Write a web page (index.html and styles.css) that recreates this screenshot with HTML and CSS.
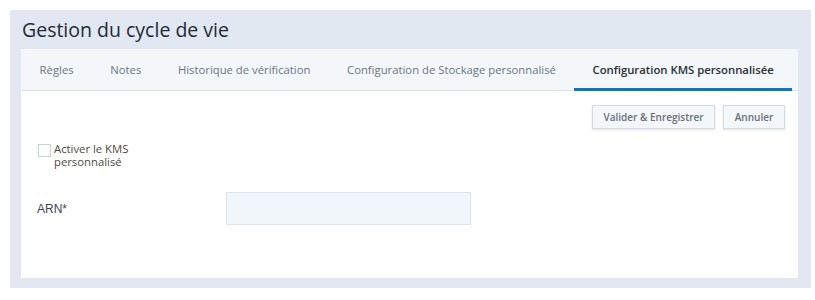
FILE: index.html
```html
<!DOCTYPE html>
<html lang="fr">
<head>
<meta charset="utf-8">
<title>Gestion du cycle de vie</title>
<link rel="stylesheet" href="styles.css">
</head>
<body>
<div class="panel">
  <h1 class="title">Gestion du cycle de vie</h1>
  <div class="card">
    <nav class="tabs">
      <a class="tab">Règles</a>
      <a class="tab">Notes</a>
      <a class="tab">Historique de vérification</a>
      <a class="tab">Configuration de Stockage personnalisé</a>
      <a class="tab active">Configuration KMS personnalisée</a>
    </nav>
    <div class="content">
      <div class="actions">
        <button class="btn btn-save">Valider &amp; Enregistrer</button>
        <button class="btn btn-cancel">Annuler</button>
      </div>
      <label class="check">
        <span class="box"></span>
        <span class="check-text">Activer le KMS personnalisé</span>
      </label>
      <div class="field">
        <span class="field-label">ARN*</span>
        <span class="input"></span>
      </div>
    </div>
  </div>
</div>
</body>
</html>
```

FILE: styles.css
```css
html, body {
  margin: 0;
  padding: 0;
  background: #ffffff;
}
body {
  padding: 10px 4px 12px 10px;
  font-family: "Open Sans", "Noto Sans", sans-serif;
}
.panel {
  background: #e1e8f1;
  padding: 0 13px 10px 11px;
  height: 278px;
  box-sizing: border-box;
}
.title {
  margin: 0;
  font-size: 19.5px;
  font-weight: 400;
  color: #1f2a36;
  line-height: 39px;
  padding-left: 1px;
  white-space: nowrap;
}
.card {
  background: #ffffff;
  height: 229px;
}
.tabs {
  display: flex;
  background: #f3f7fa;
  border-bottom: 1px solid #dbe4ec;
  height: 41px;
}
.tab {
  display: flex;
  align-items: center;
  padding: 1px 18px 0 18.6px;
  font-size: 11.3px;
  color: #6b7580;
  border-bottom: 3px solid transparent;
  margin-bottom: -1px;
  white-space: nowrap;
}
.tab.active {
  color: #2a2f35;
  font-weight: 600;
  border-bottom-color: #0b78c2;
}
.content {
  display: flex;
  flex-direction: column;
  padding: 14px 13px 0 16px;
}
.actions {
  display: flex;
  justify-content: flex-end;
  gap: 8px;
}
.btn {
  font-family: "Open Sans", "Noto Sans", sans-serif;
  font-size: 10px;
  font-weight: 600;
  color: #6a7079;
  background: #f3f7fa;
  border: 1px solid #d3dbe3;
  box-shadow: 0 1px 2px rgba(0,0,0,0.12);
  height: 24px;
  padding: 0;
  white-space: nowrap;
}
.btn-save { width: 123px; }
.btn-cancel { width: 62px; }
.check {
  display: flex;
  align-items: flex-start;
  gap: 3px;
  margin-top: 14px;
  margin-left: 1px;
  width: 110px;
}
.box {
  width: 11px;
  height: 11px;
  border: 1px solid #c9d1d9;
  background: #fff;
  flex: none;
  margin-top: 1px;
}
.check-text {
  font-size: 11.3px;
  line-height: 12.5px;
  color: #4e4a40;
}
.field {
  display: flex;
  align-items: center;
  margin-top: 24px;
}
.field-label {
  font-family: "Liberation Sans", Arial, sans-serif;
  font-size: 12px;
  color: #3c4652;
  width: 189px;
}
.input {
  display: block;
  width: 243px;
  height: 31px;
  background: #f0f6fa;
  border: 1px solid #dbe4ec;
}
```
